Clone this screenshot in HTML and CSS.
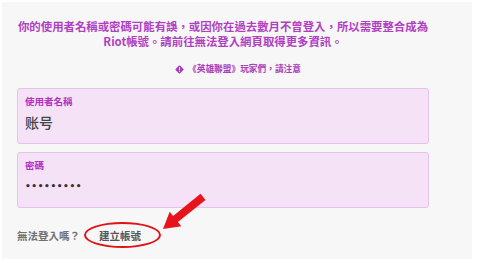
FILE: index.html
```html
<!DOCTYPE html>
<html lang="zh-Hant">
<head>
  <meta charset="UTF-8">
  <meta name="viewport" content="width=device-width, initial-scale=1">
  <title>登入</title>
  <link rel="stylesheet" href="styles.css">
</head>
<body>
  <div class="panel">
    <div class="content">
      <p class="warning">
        <span class="line">你的使用者名稱或密碼可能有誤，或因你在過去數月不曾登入，所以需要整合成為</span>
        <span class="line">Riot帳號。請前往無法登入網頁取得更多資訊。</span>
      </p>
      <div class="notice">
        <svg class="notice-icon" width="9" height="9" viewBox="0 0 10 10">
          <rect x="1.5" y="1.5" width="7" height="7" rx="1.2" transform="rotate(45 5 5)" fill="#a93cbc"/>
          <rect x="4.4" y="2.6" width="1.2" height="3" fill="#fff"/>
          <rect x="4.4" y="6.4" width="1.2" height="1.1" fill="#fff"/>
        </svg>
        <span>《英雄聯盟》玩家們，請注意</span>
      </div>
      <div class="field">
        <div class="field-label">使用者名稱</div>
        <div class="field-value">账号</div>
      </div>
      <div class="field">
        <div class="field-label">密碼</div>
        <div class="field-value dots">•••••••••</div>
      </div>
      <div class="help">
        <span class="help-text">無法登入嗎？</span>
        <a class="help-link" href="#">建立帳號<span class="ring"></span></a>
      </div>
    </div>
    <svg class="arrow" width="56" height="48" viewBox="0 0 56 48">
      <polygon points="45.5,5.8 50.5,12 22.9,34 26.3,38.3 8,41 14.7,23.7 18.1,28" fill="#e8141c"/>
    </svg>
  </div>
</body>
</html>
```

FILE: styles.css
```css
* { box-sizing: border-box; margin: 0; padding: 0; }
body {
  font-family: "Noto Sans CJK TC", "Noto Sans", sans-serif;
  background: #ffffff;
  color: #555;
}
/* パネル */
.panel {
  position: relative;
  margin: 2px 8px 0 2px;
  height: 257px;
  background: #f7f7f7;
}
.content {
  width: 412px;
  margin-left: 15px;
  padding-top: 17px;
  display: flex;
  flex-direction: column;
}
.warning {
  font-size: 11.4px;
  line-height: 15px;
  font-weight: 700;
  color: #b040c2;
  text-align: center;
}
.line {
  display: block;
  white-space: nowrap;
}
.notice {
  margin-top: 14px;
  display: flex;
  align-items: center;
  justify-content: center;
  gap: 4px;
  font-size: 8.7px;
  line-height: 12px;
  font-weight: 700;
  color: #a940bc;
  padding-left: 30px;
}
/* 入力欄 */
.field {
  margin-top: 13px;
  height: 56px;
  background: #f6e2f6;
  border: 1px solid #e6c3ea;
  border-radius: 3px;
  padding: 6px 7px;
}
.field + .field { margin-top: 8px; }
.field-label {
  font-size: 9.5px;
  line-height: 12px;
  font-weight: 700;
  color: #b032c2;
}
.field-value {
  margin-top: 6px;
  font-size: 14px;
  line-height: 18px;
  font-weight: 500;
  color: #444;
}
.dots {
  font-family: "DejaVu Sans", sans-serif;
  font-size: 9px;
  letter-spacing: 0.6px;
  font-weight: 700;
  color: #333;
}
/* 下部 */
.help {
  margin-top: 21px;
  display: flex;
  align-items: center;
  font-size: 10.5px;
  line-height: 14px;
  font-weight: 700;
  color: #707070;
}
.help-link {
  position: relative;
  margin-left: 19px;
  color: #555;
  text-decoration: none;
}
.ring {
  position: absolute;
  left: -15px;
  top: -7px;
  width: 77px;
  height: 26px;
  border: 2.5px solid #e01317;
  border-radius: 50%;
}
.arrow {
  position: absolute;
  left: 153px;
  top: 186px;
}
```
